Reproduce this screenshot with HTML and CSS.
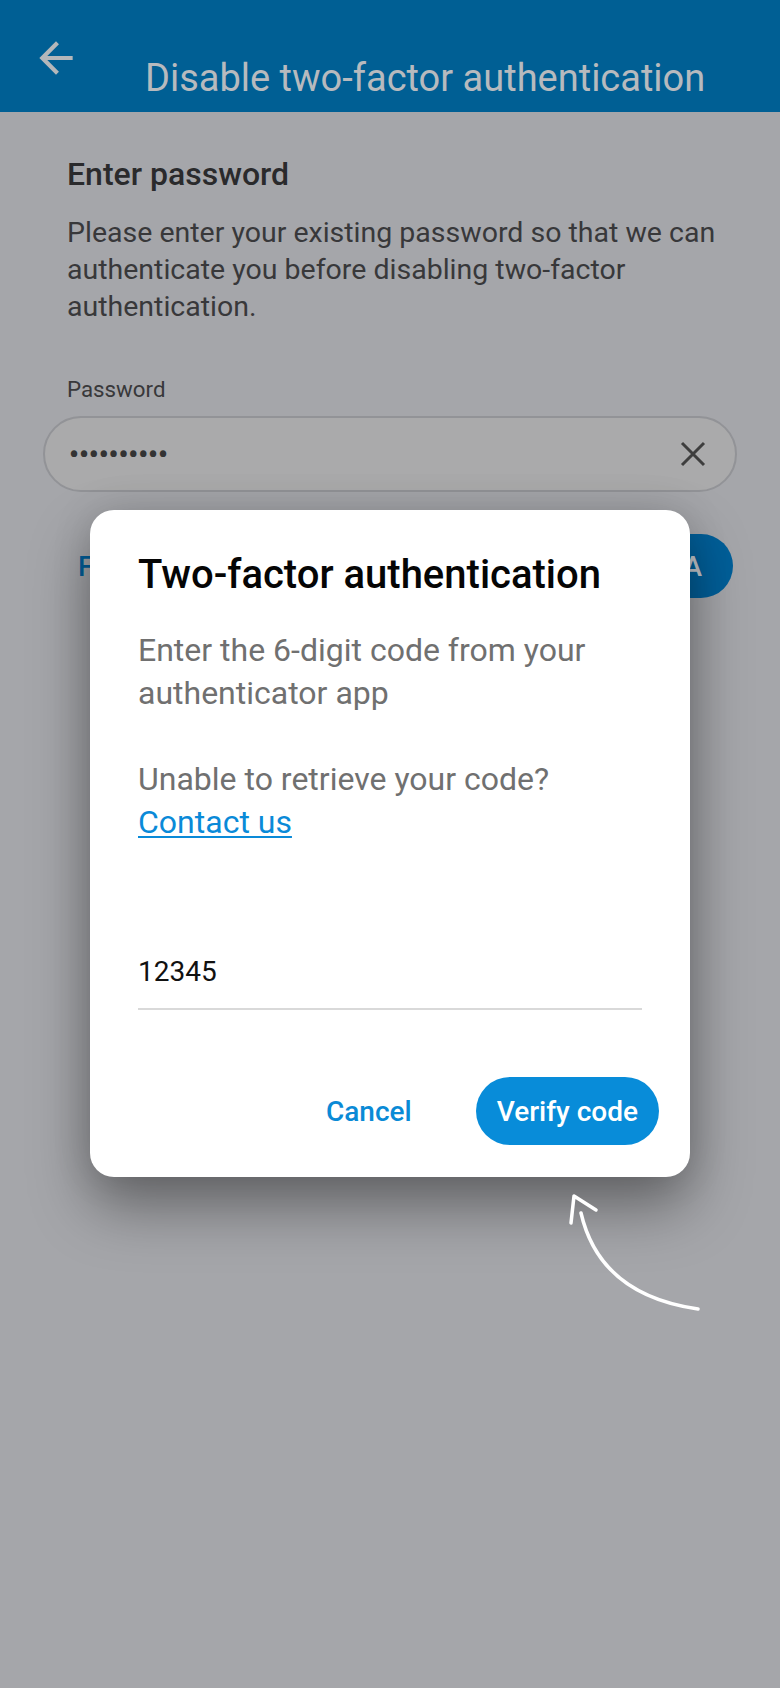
FILE: index.html
```html
<!DOCTYPE html>
<html lang="en">
<head>
    <meta charset="UTF-8">
    <meta name="viewport" content="width=device-width, initial-scale=1.0">
    <title>Disable two-factor authentication</title>
    <link rel="stylesheet" href="styles.css">
</head>
<body>
    <header class="topbar">
        <svg class="back-icon" viewBox="0 0 24 24" width="50" height="50">
            <path d="M20 11H7.83l5.59-5.59L12 4l-8 8 8 8 1.41-1.41L7.83 13H20v-2z"/>
        </svg>
        <h1 class="topbar-title">Disable two-factor authentication</h1>
    </header>

    <main class="content">
        <h2 class="section-title">Enter password</h2>
        <p class="section-text">Please enter your existing password so that we can authenticate you before disabling two-factor authentication.</p>

        <label class="field-label">Password</label>
        <div class="password-field">
            <span class="dots">••••••••••</span>
            <svg class="clear-icon" viewBox="0 0 26 26" width="26" height="26">
                <path d="M2 2L24 24M24 2L2 24"/>
            </svg>
        </div>

        <div class="form-actions">
            <a class="forgot-link">Forgot password?</a>
            <button class="disable-btn">Disable 2FA</button>
        </div>
    </main>

    <div class="overlay">
        <div class="dialog">
            <h3 class="dialog-title">Two-factor authentication</h3>
            <p class="dialog-text">Enter the 6-digit code from your authenticator app</p>
            <p class="dialog-text help">Unable to retrieve your code?<br><a class="contact-link">Contact us</a></p>

            <div class="code-field">12345</div>

            <div class="dialog-actions">
                <button class="text-btn">Cancel</button>
                <button class="verify-btn">Verify code</button>
            </div>
        </div>

        <svg class="hint-arrow" viewBox="0 0 150 135" width="150" height="135">
            <path d="M14 11L11 38M14 11L36 25"/>
            <path d="M21 28Q40 110 138 124"/>
        </svg>
    </div>
</body>
</html>
```

FILE: styles.css
```css
html {
    background-color: #a5a6aa;
}

body {
    font-family: Roboto, 'Noto Sans', sans-serif;
    background-color: #a5a6aa;
    margin: 0;
    padding: 0;
    min-height: 1688px;
    position: relative;
}

.topbar {
    background-color: #005f94;
    height: 112px;
    display: flex;
    align-items: flex-start;
    padding: 33px 0 0 31px;
    box-sizing: border-box;
}

.back-icon {
    fill: #b4b7ba;
    flex-shrink: 0;
}

.topbar-title {
    margin: 23px 0 0 64px;
    font-size: 38px;
    line-height: 44px;
    font-weight: 400;
    color: #b7babe;
    white-space: nowrap;
}

.content {
    padding: 0 43px 0 67px;
    display: flex;
    flex-direction: column;
}

.section-title {
    margin: 42px 0 0;
    font-size: 32px;
    line-height: 40px;
    font-weight: 500;
    color: #2a2a2c;
}

.section-text {
    margin: 20px 0 0;
    font-size: 28.5px;
    line-height: 37px;
    color: #38383a;
}

.field-label {
    margin-top: 50px;
    font-size: 22.3px;
    line-height: 28px;
    color: #38383a;
}

.password-field {
    margin: 13px 0 0 -24px;
    height: 76px;
    box-sizing: border-box;
    border: 2px solid #929397;
    border-radius: 38px;
    background-color: #aaaaab;
    display: flex;
    align-items: center;
    justify-content: space-between;
    padding: 0 29px 0 24px;
}

.dots {
    font-size: 27.5px;
    font-weight: 700;
    color: #333;
}

.clear-icon {
    stroke: #3e3e3e;
    stroke-width: 3;
    fill: none;
}

.form-actions {
    margin-top: 42px;
    display: flex;
    align-items: center;
    justify-content: space-between;
    padding: 0 4px 0 11px;
}

.forgot-link {
    font-size: 28px;
    font-weight: 500;
    color: #005e99;
}

.disable-btn {
    height: 64px;
    padding: 0 31px;
    border: none;
    border-radius: 32px;
    background-color: #005f99;
    color: #c5c8cc;
    font-family: inherit;
    font-size: 28px;
    font-weight: 500;
}

.overlay {
    position: absolute;
    top: 0;
    left: 0;
    width: 100%;
    height: 1688px;
}

.dialog {
    width: 600px;
    margin: 510px auto 0;
    box-sizing: border-box;
    background-color: #fff;
    border-radius: 24px;
    padding: 41px 31px 32px 48px;
    box-shadow: 0 30px 60px rgba(0, 0, 0, 0.38), 0 0 40px rgba(0, 0, 0, 0.12);
}

.dialog-title {
    margin: 0;
    font-size: 40px;
    line-height: 48px;
    font-weight: 500;
    color: #050505;
}

.dialog-text {
    margin: 30px 17px 0 0;
    font-size: 32px;
    line-height: 43px;
    color: #707070;
}

.dialog-text.help {
    margin-top: 43px;
}

.contact-link {
    color: #0a8ad8;
    text-decoration: underline;
    text-decoration-thickness: 2px;
    text-underline-offset: 3px;
}

.code-field {
    margin: 108px 17px 0 0;
    font-size: 28px;
    line-height: 40px;
    color: #111;
    padding-bottom: 16px;
    border-bottom: 2px solid #d9d9d9;
}

.dialog-actions {
    margin-top: 67px;
    display: flex;
    justify-content: flex-end;
    align-items: center;
    gap: 44px;
}

.text-btn {
    border: none;
    background: none;
    padding: 0 20px;
    height: 68px;
    font-family: inherit;
    font-size: 28px;
    font-weight: 500;
    color: #0a8ad6;
}

.verify-btn {
    height: 68px;
    padding: 0 21px;
    border: none;
    border-radius: 34px;
    background-color: #088cd9;
    color: #fff;
    font-family: inherit;
    font-size: 28px;
    font-weight: 500;
}

.hint-arrow {
    position: absolute;
    left: 560px;
    top: 1185px;
    fill: none;
    stroke: #fff;
    stroke-width: 3.5;
    stroke-linecap: round;
}
```
